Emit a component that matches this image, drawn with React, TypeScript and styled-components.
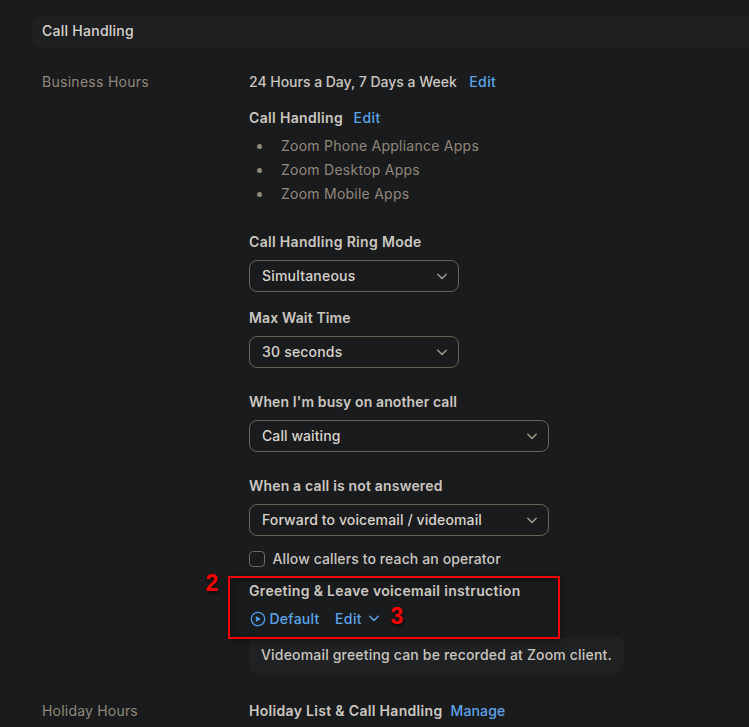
import React from 'react';
import styled, { createGlobalStyle } from 'styled-components';

const GlobalStyle = createGlobalStyle`
  * { box-sizing: border-box; }
  body { margin: 0; background: #1a1b1c; overflow: hidden; }
`;

const Page = styled.main`
  position: relative;
  width: 749px;
  height: 727px;
  overflow: hidden;
  padding: 16px 0 0 32px;
  background: #1a1b1c;
  color: #cbc7c0;
  font: 400 14px/20px Inter, "Liberation Sans", sans-serif;
  white-space: nowrap;
`;

const SectionHeader = styled.header`
  height: 32px;
  padding: 5px 10px;
  border-radius: 8px 0 0 8px;
  background: #1e1f21;
  color: #d8d4cc;
`;

const SettingRow = styled.section<{ $top: number }>`
  display: grid;
  grid-template-columns: 207px 1fr;
  margin-top: ${p => p.$top}px;
  padding-left: 10px;
`;

const Text = styled.span<{ $spacing?: number; $weight?: number }>`
  font-weight: ${p => p.$weight ?? 500};
  letter-spacing: ${p => p.$spacing ?? 0}px;
`;

const RowLabel = styled(Text)`
  color: #91887b;
`;

const Content = styled.div`
  display: flex;
  flex-direction: column;
  align-items: flex-start;
`;

const Line = styled.div<{ $top?: number; $gap?: number }>`
  display: flex;
  align-items: center;
  height: 20px;
  gap: ${p => p.$gap ?? 0}px;
  margin-top: ${p => p.$top ?? 0}px;
`;

const Link = styled.a<{ $spacing?: number }>`
  color: #5ba5ea;
  font-weight: 500;
  letter-spacing: ${p => p.$spacing ?? 0.4}px;
`;

const AppList = styled.ul`
  margin: 6px 0 0;
  padding: 0;
  list-style: none;
  color: #91887b;
  line-height: 24px;
`;

const AppItem = styled.li`
  display: flex;
  align-items: center;
  height: 24px;
  gap: 19px;
  padding-left: 8px;

  &::before {
    content: '';
    width: 5px;
    height: 5px;
    border-radius: 50%;
    background: #91887b;
  }
`;

const Select = styled.div<{ $width: number }>`
  display: flex;
  align-items: center;
  justify-content: space-between;
  width: ${p => p.$width}px;
  height: 32px;
  margin-top: 8px;
  padding: 0 10px 0 12px;
  border: 1px solid #6a6256;
  border-radius: 8px;
  color: #d8d4cc;
`;

const Checkbox = styled.span`
  width: 16px;
  height: 16px;
  border: 1px solid #6f675b;
  border-radius: 4px;
`;

const Playback = styled.span`
  display: flex;
  align-items: center;
  gap: 3.5px;
  margin-left: 1px;
`;

const EditMenu = styled.span`
  display: flex;
  align-items: center;
  gap: 6px;
  margin-left: 15.5px;

  svg {
    margin-bottom: 3px;
  }
`;

const Note = styled.div`
  width: 375px;
  height: 36px;
  margin-top: 8px;
  padding: 8px 12px;
  border-radius: 8px;
  background: #1f2122;
`;

const Highlight = styled.div`
  position: absolute;
  left: 228px;
  top: 576px;
  width: 332px;
  height: 63px;
  border: 2px solid #fb0006;
  box-shadow: 2px 2px 7px rgba(0, 0, 0, 0.4), inset 2px 2px 7px rgba(0, 0, 0, 0.4);
`;

const StepNumber = styled.span<{ $x: number; $y: number }>`
  position: absolute;
  left: ${p => p.$x}px;
  top: ${p => p.$y}px;
  color: #fe0003;
  font: 700 23px/26px "Liberation Sans", Arial, sans-serif;
  text-shadow: 1px 2px 3px rgba(0, 0, 0, 0.6);
`;

const Chevron = ({ color = '#a1988b' }: { color?: string }) => (
  <svg width="12" height="12" viewBox="0 0 12 12" fill="none" stroke={color} strokeWidth="1.5" strokeLinecap="round" strokeLinejoin="round">
    <path d="M1.8 4.3 6 8.5l4.2-4.2" />
  </svg>
);

const PlayIcon = () => (
  <svg width="16" height="16" viewBox="0 0 16 16">
    <circle cx="8" cy="8" r="6.7" fill="none" stroke="#4b9ce8" strokeWidth="1.3" />
    <path d="M5.8 4.9v6.2L11 8z" fill="#4b9ce8" />
  </svg>
);

type DropdownProps = { label: string; labelSpacing: number; value: string; valueSpacing: number; width: number; top: number };

const Dropdown = ({ label, labelSpacing, value, valueSpacing, width, top }: DropdownProps) => (
  <>
    <Line $top={top}><Text $weight={600} $spacing={labelSpacing}>{label}</Text></Line>
    <Select $width={width}>
      <Text $spacing={valueSpacing}>{value}</Text>
      <Chevron />
    </Select>
  </>
);

export default function App() {
  return (
    <Page>
      <GlobalStyle />
      <SectionHeader><Text $spacing={0.26}>Call Handling</Text></SectionHeader>

      <SettingRow $top={24}>
        <RowLabel $weight={400} $spacing={0.28}>Business Hours</RowLabel>
        <Content>
          <Line $gap={12.5}>
            <Text $spacing={-0.02}>24 Hours a Day, 7 Days a Week</Text>
            <Link>Edit</Link>
          </Line>
          <Line $top={16} $gap={10.5}>
            <Text $weight={600} $spacing={0.34}>Call Handling</Text>
            <Link>Edit</Link>
          </Line>
          <AppList>
            <AppItem><Text $weight={400} $spacing={0.25}>Zoom Phone Appliance Apps</Text></AppItem>
            <AppItem><Text $weight={400} $spacing={0.25}>Zoom Desktop Apps</Text></AppItem>
            <AppItem><Text $weight={400} $spacing={0.24}>Zoom Mobile Apps</Text></AppItem>
          </AppList>
          <Dropdown top={26} width={210} label="Call Handling Ring Mode" labelSpacing={0.32} value="Simultaneous" valueSpacing={0.2} />
          <Dropdown top={16} width={210} label="Max Wait Time" labelSpacing={0.14} value="30 seconds" valueSpacing={0.2} />
          <Dropdown top={24} width={300} label="When I'm busy on another call" labelSpacing={0.11} value="Call waiting" valueSpacing={0.08} />
          <Dropdown top={24} width={300} label="When a call is not answered" labelSpacing={0.18} value="Forward to voicemail / videomail" valueSpacing={0.12} />
          <Line $top={13} $gap={7.5}>
            <Checkbox />
            <Text $spacing={0.11}>Allow callers to reach an operator</Text>
          </Line>
          <Line $top={12}><Text $weight={600} $spacing={0.32}>Greeting &amp; Leave voicemail instruction</Text></Line>
          <Line $top={8}>
            <Playback><PlayIcon /><Link $spacing={0.25}>Default</Link></Playback>
            <EditMenu>
              <Link>Edit</Link>
              <Chevron color="#5ba5ea" />
            </EditMenu>
          </Line>
          <Note><Text $spacing={0.18}>Videomail greeting can be recorded at Zoom client.</Text></Note>
        </Content>
      </SettingRow>

      <SettingRow $top={28}>
        <RowLabel $weight={400} $spacing={0.2}>Holiday Hours</RowLabel>
        <Content>
          <Line $gap={8}>
            <Text $weight={600} $spacing={0.31}>Holiday List &amp; Call Handling</Text>
            <Link $spacing={0.14}>Manage</Link>
          </Line>
        </Content>
      </SettingRow>

      <Highlight />
      <StepNumber $x={205.5} $y={570}>2</StepNumber>
      <StepNumber $x={390.5} $y={603}>3</StepNumber>
    </Page>
  );
}
